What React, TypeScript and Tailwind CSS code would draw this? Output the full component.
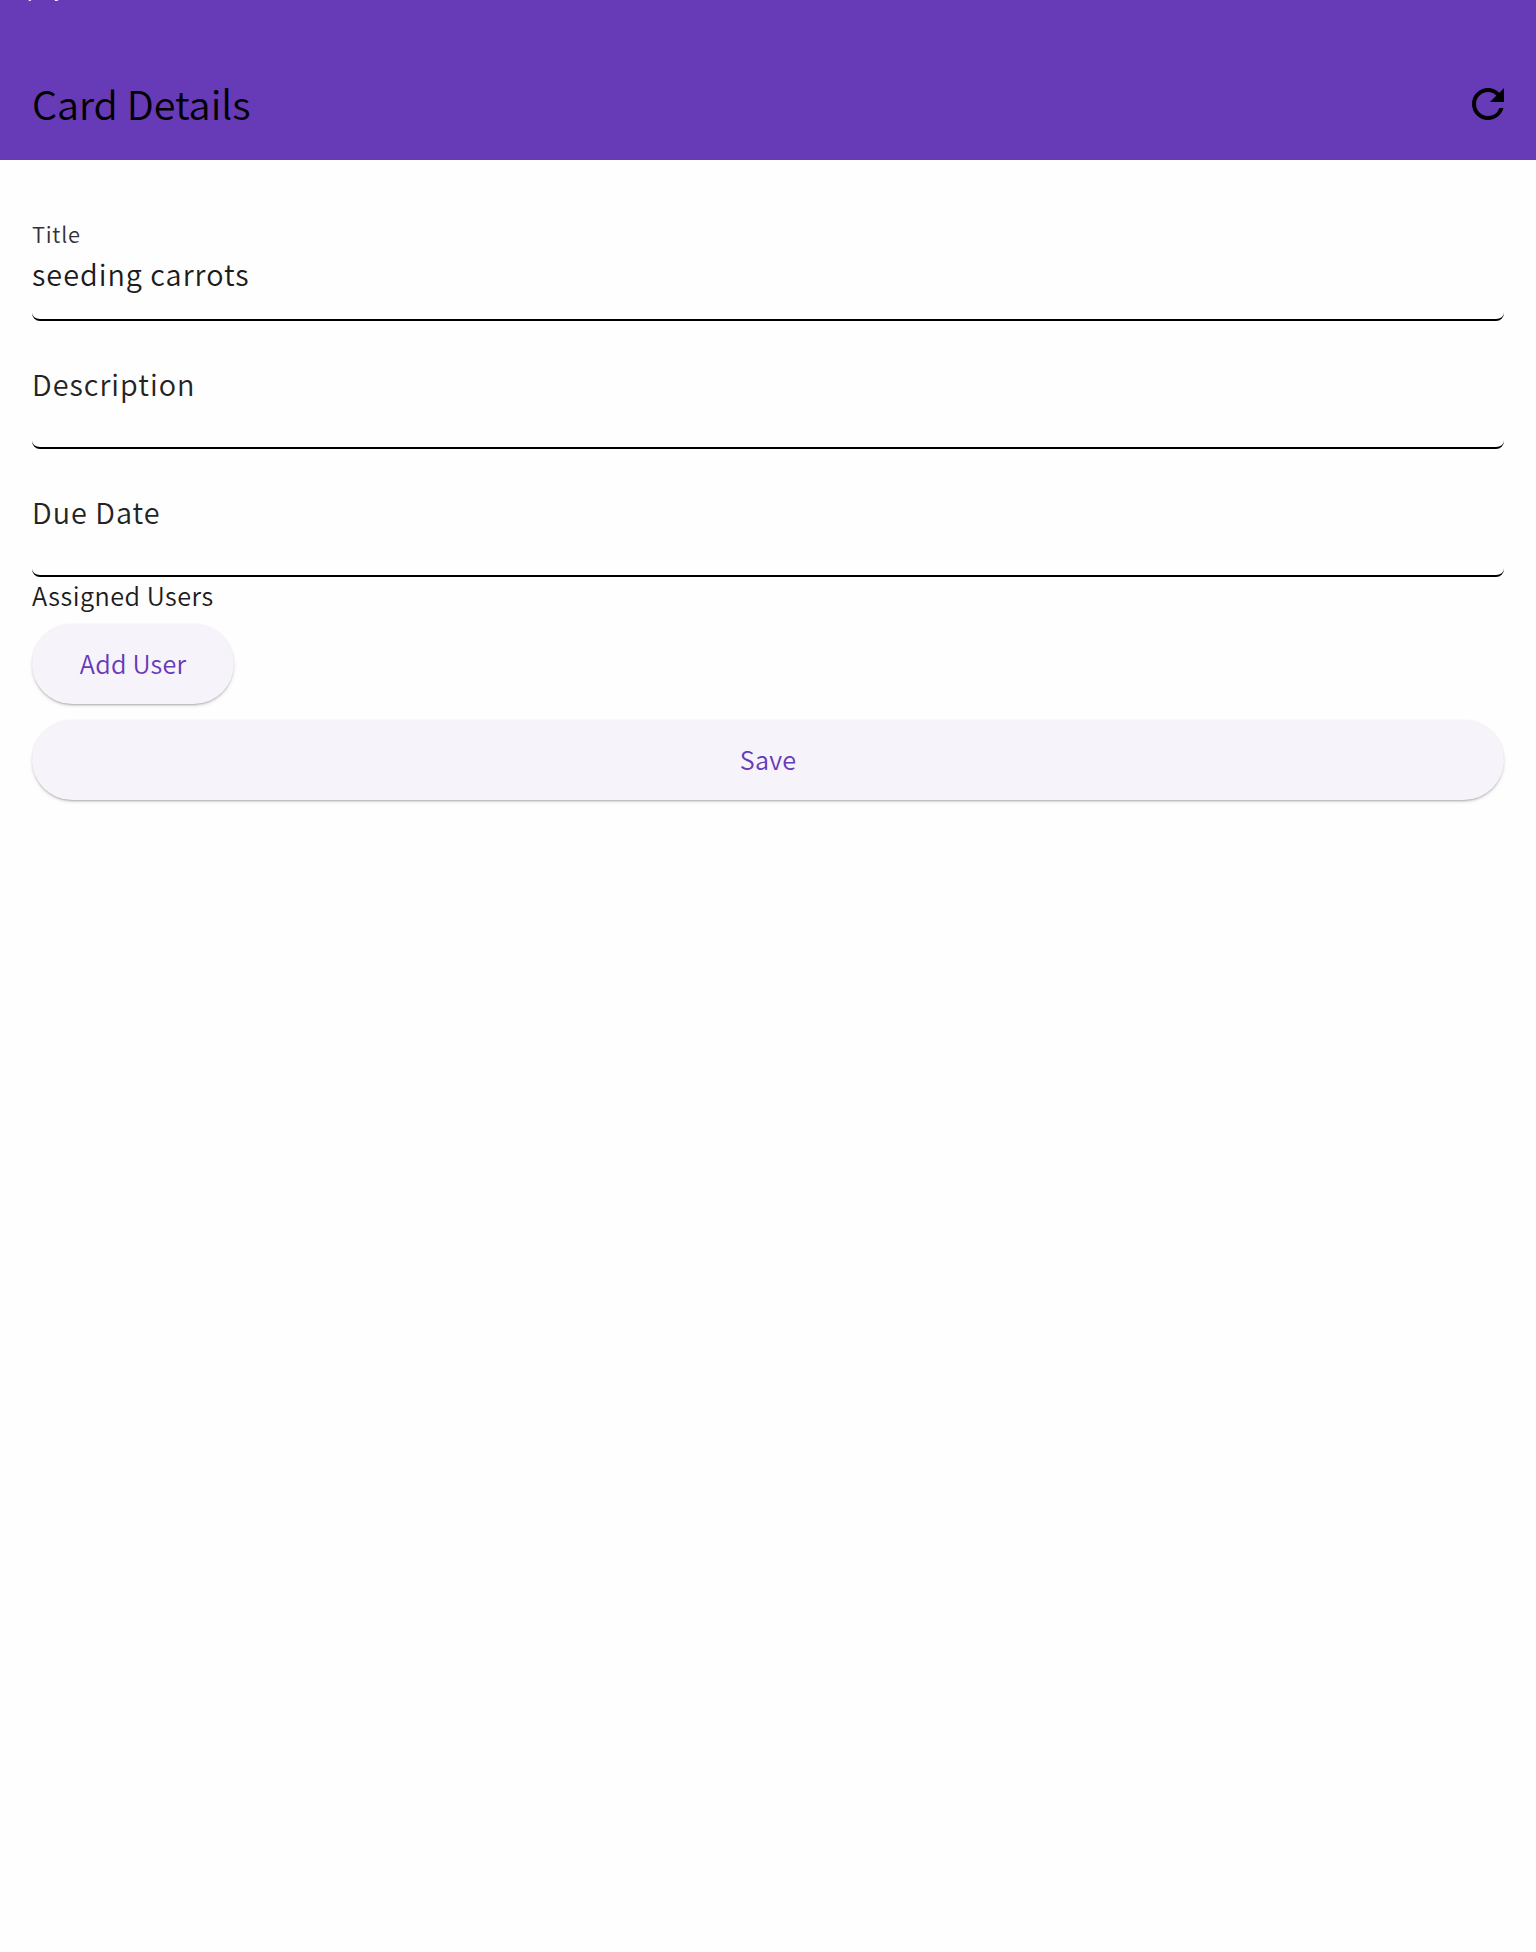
import React from "react";

function Field({ label, value, className }: { label: string; value?: string; className: string }) {
  return (
    <div className={`relative ${className}`}>
      {value ? (
        <>
          <div className="pt-[9px] text-[21.8px] leading-[32px] tracking-[0.75px] text-[#333136]">{label}</div>
          <div className="pt-px text-[28.8px] leading-[46px] tracking-[1px] text-[#1d1b20]">{value}</div>
        </>
      ) : (
        <div className="pt-[23px] text-[28.8px] leading-[48px] tracking-[1px] text-[#242424]">{label}</div>
      )}
      <div className="absolute inset-x-0 bottom-0 h-[96px] rounded-[8px] border-b-2 border-black" />
    </div>
  );
}

const button =
  "flex h-[80px] items-center rounded-full bg-[#f6f3fb] text-[25.2px] tracking-[0.2px] text-[#673ab7] shadow-[0_2px_2px_-1px_rgba(0,0,0,0.2),0_2px_4px_-1px_rgba(0,0,0,0.18),0_0_2px_rgba(0,0,0,0.06)]";

export default function App() {
  return (
    <div className="min-h-[1952px] bg-[#fefefe] font-['Noto_Sans_CJK_JP',sans-serif] font-[350]">
      <header className="relative flex h-[160px] items-center justify-between overflow-hidden bg-[#673ab7] px-8 pt-[48px]">
        <span className="absolute top-[-22px] left-[2px] font-['Liberation_Sans',sans-serif] text-[20px] leading-[24px] font-normal text-white">
          Deploy
        </span>
        <h1 className="pb-[2px] text-[39.5px] leading-[56px] font-[350] text-black">Card Details</h1>
        <svg viewBox="0 0 24 24" className="-mr-2 size-[48px]" fill="black">
          <path d="M17.65 6.35A7.958 7.958 0 0 0 12 4c-4.42 0-7.99 3.58-7.99 8s3.57 8 7.99 8c3.73 0 6.84-2.55 7.73-6h-2.08A5.99 5.99 0 0 1 12 18c-3.31 0-6-2.69-6-6s2.69-6 6-6c1.66 0 3.14.69 4.22 1.78L13 11h7V4l-2.35 2.35z" />
        </svg>
      </header>
      <main className="px-8 pt-[49px]">
        <Field label="Title" value="seeding carrots" className="h-[112px]" />
        <Field label="Description" className="mt-[16px] h-[112px]" />
        <Field label="Due Date" className="mt-[16px] h-[112px]" />
        <p className="h-[47px] text-[25.2px] leading-[36px] tracking-[0.5px] text-[#1d1b20]">Assigned Users</p>
        <button className={`${button} w-[202px] justify-center`}>Add User</button>
        <button className={`${button} mt-[16px] w-full justify-center`}>Save</button>
      </main>
    </div>
  );
}
